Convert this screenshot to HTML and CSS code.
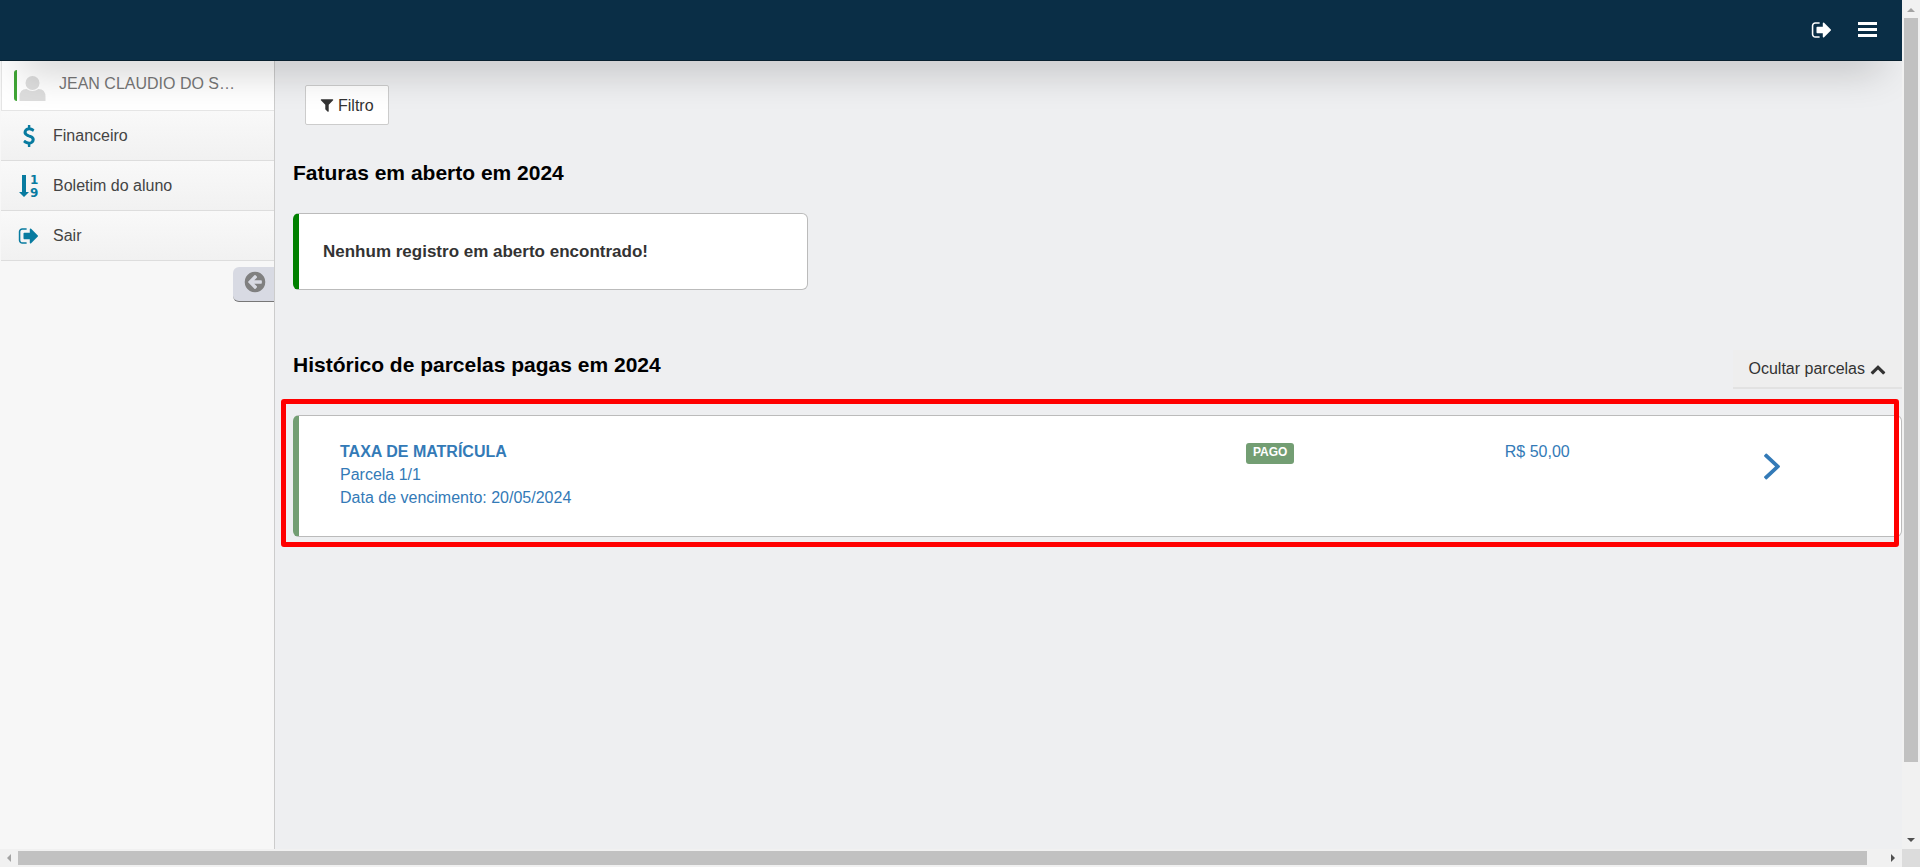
FILE: index.html
```
<!DOCTYPE html>
<html lang="pt-BR">
<head>
    <meta charset="UTF-8">
    <meta name="viewport" content="width=device-width, initial-scale=1.0">
    <title>Financeiro</title>
    <link rel="stylesheet" href="styles.css">
</head>
<body>
    <svg class="sprite" aria-hidden="true">
        <symbol id="sign-out" viewBox="0 0 1792 1792">
            <path d="M704 1440q0 4 1 20t.5 26.5-3 23.5-10 19.5-20.5 6.5h-320q-119 0-203.5-84.5t-84.5-203.5v-704q0-119 84.5-203.5t203.5-84.5h320q13 0 22.5 9.5t9.5 22.5q0 4 1 20t.5 26.5-3 23.5-10 19.5-20.5 6.5h-320q-66 0-113 47t-47 113v704q0 66 47 113t113 47h312l11.5 1 11.5 3 8 5.5 7 9 2 13.5zm928-544q0 26-19 45l-544 544q-19 19-45 19t-45-19-19-45v-288h-448q-26 0-45-19t-19-45v-384q0-26 19-45t45-19h448v-288q0-26 19-45t45-19 45 19l544 544q19 19 19 45z"/>
        </symbol>
    </svg>

    <div class="viewport">
        <div class="page">
            <header class="topbar">
                <a href="#" class="topbar-link" aria-label="Sair"><svg class="icon"><use href="#sign-out"/></svg></a>
                <button type="button" class="topbar-link" aria-label="Menu">
                    <svg class="icon-bars" viewBox="0 0 19 16"><path d="M0 0h19v3H0zM0 6h19v3H0zM0 12h19v3H0z"/></svg>
                </button>
            </header>

            <div class="main">
                <nav class="sidebar">
                    <a href="#" class="user">
                        <span class="avatar">
                            <svg viewBox="0 0 26 26"><circle cx="13" cy="8" r="7"/><path d="M0 26v-4q0-8 7-8 6 4 12 0 7 0 7 8v4z"/></svg>
                        </span>
                        <span class="user-name">JEAN CLAUDIO DO S…</span>
                    </a>
                    <a href="#" class="menu-item">
                        <svg class="icon" viewBox="0 0 1792 1792"><path d="M1362 1185q0 153-99.5 263.5t-258.5 136.5v175q0 14-9 23t-23 9h-135q-13 0-22.5-9.5t-9.5-22.5v-175q-66-9-127.5-31t-101.5-44.5-74-48-46.5-37.5-17.5-18q-17-21-2-41l103-135q7-10 23-12 15-2 24 9l2 2q113 99 243 125 37 8 74 8 81 0 142.5-43t61.5-122q0-28-15-53t-33.5-42-58.5-37.5-66-32-80-32.5q-39-16-61.5-25t-61.5-26.5-62.5-31-56.5-35.5-53.5-42.5-43.5-49-35.5-58-21-66.5-8.5-78q0-138 98-242t255-134v-180q0-13 9.5-22.5t22.5-9.5h135q14 0 23 9t9 23v176q57 6 110.5 23t87 33.5 63.5 37.5 39 29 15 14q17 18 5 38l-81 146q-8 15-23 16-14 3-27-7-3-3-14.5-12t-39-26.5-58.5-32-74.5-26-85.5-11.5q-95 0-155 43t-60 111q0 26 8.5 48t29.5 41.5 39.5 33 56 31 60.5 27 70 27.5q53 20 81 31.5t76 35 75.5 42.5 62 50 53 63.5 31.5 76.5 13 94z"/></svg>
                        Financeiro
                    </a>
                    <a href="#" class="menu-item">
                        <svg class="icon" viewBox="0 0 22 22">
                            <path d="M4 0h4v17h3l-5 5L1 17h3z"/>
                            <text x="12" y="9">1</text>
                            <text x="12" y="22">9</text>
                        </svg>
                        Boletim do aluno
                    </a>
                    <a href="#" class="menu-item">
                        <svg class="icon"><use href="#sign-out"/></svg>
                        Sair
                    </a>
                    <button type="button" class="collapse" aria-label="Recolher menu">
                        <svg viewBox="0 0 1792 1792"><path d="M1408 960v-128q0-26-19-45t-45-19h-502l189-189q19-19 19-45t-19-45l-91-91q-18-18-45-18t-45 18l-362 362-91 91q-18 18-18 45t18 45l91 91 362 362q18 18 45 18t45-18l91-91q18-18 18-45t-18-45l-189-189h502q26 0 45-19t19-45zm256-64q0 209-103 385.5t-279.5 279.5-385.5 103-385.5-103-279.5-279.5-103-385.5 103-385.5 279.5-279.5 385.5-103 385.5 103 279.5 279.5 103 385.5z"/></svg>
                    </button>
                </nav>

                <main class="content">
                    <button type="button" class="btn-filter">
                        <svg class="icon-sm" viewBox="0 0 1792 1792"><path d="M1595 295q17 41-14 70l-493 493v742q0 42-39 59-13 5-25 5-27 0-45-19l-256-256q-19-19-19-45v-486l-493-493q-31-29-14-70 17-39 59-39h1280q42 0 59 39z"/></svg>
                        Filtro
                    </button>

                    <h2>Faturas em aberto em 2024</h2>
                    <div class="card card-empty">Nenhum registro em aberto encontrado!</div>

                    <div class="history-head">
                        <h2>Histórico de parcelas pagas em 2024</h2>
                        <button type="button" class="btn-toggle">
                            Ocultar parcelas
                            <svg class="icon-sm" viewBox="0 0 1792 1792"><path d="M1683 1331l-166 165q-19 19-45 19t-45-19l-531-531-531 531q-19 19-45 19t-45-19l-166-165q-19-19-19-45.500t19-45.500l742-741q19-19 45-19t45 19l742 741q19 19 19 45.500t-19 45.500z"/></svg>
                        </button>
                    </div>
                    <div class="history">
                        <a href="#" class="card card-paid">
                            <span class="invoice">
                                <strong>TAXA DE MATRÍCULA</strong>
                                <span>Parcela 1/1</span>
                                <span>Data de vencimento: 20/05/2024</span>
                            </span>
                            <span class="status"><span class="badge">PAGO</span></span>
                            <span>R$ 50,00</span>
                            <svg class="arrow" viewBox="589 517 582 942"><path d="M1171 988q0 13-10 23l-466 438q-10 10-23 10t-23-10l-50-50q-10-10-10-23t10-23l393-365-393-365q-10-10-10-23t10-23l50-50q10-10 23-10t23 10l466 438q10 10 10 23z"/></svg>
                        </a>
                        <div class="highlight"></div>
                    </div>
                </main>
            </div>
        </div>

        <div class="scroll scroll-y">
            <svg class="scroll-arrow" viewBox="0 0 18 18"><path class="off" d="M5 12h8L9 8z"/></svg>
            <div class="thumb"></div>
            <svg class="scroll-arrow" viewBox="0 0 18 18"><path d="M5 7h8l-4 4z"/></svg>
        </div>
        <div class="scroll scroll-x">
            <svg class="scroll-arrow" viewBox="0 0 18 18"><path class="off" d="M11 5v8L7 9z"/></svg>
            <div class="thumb"></div>
            <svg class="scroll-arrow" viewBox="0 0 18 18"><path d="M7 5v8l4-4z"/></svg>
        </div>
        <div class="scroll-corner"></div>
    </div>
</body>
</html>
```
FILE: styles.css
```
* {
    box-sizing: border-box;
}
body {
    margin: 0;
    font-family: "Liberation Sans", Arial, sans-serif;
    font-size: 16px;
    line-height: 23px;
    color: #333;
}
a {
    text-decoration: none;
}
button {
    font: inherit;
    color: inherit;
    cursor: pointer;
}
svg {
    display: block;
    flex-shrink: 0;
    fill: currentColor;
}
.sprite {
    display: none;
}
.icon {
    width: 22px;
    height: 22px;
    overflow: visible;
}
.icon-sm {
    width: 16px;
    height: 16px;
}

.viewport {
    display: grid;
    grid-template-columns: 1fr 18px;
    grid-template-rows: 1fr 18px;
    height: 100vh;
}
.page {
    display: flex;
    flex-direction: column;
    min-width: 0;
    overflow: hidden;
    background: #eeeff1;
}

/* top bar */
.topbar {
    position: relative;
    z-index: 2;
    display: flex;
    justify-content: flex-end;
    align-items: center;
    gap: 25px;
    height: 61px;
    padding: 0 25px 0 0;
    background: #0a2e46;
    border-bottom: 1px solid #08202f;
    box-shadow: 0 25px 40px -20px rgba(0, 0, 0, .3);
}
.topbar-link {
    padding: 0;
    border: 0;
    background: none;
    color: #fff;
}
.icon-bars {
    width: 19px;
    height: 16px;
}

.main {
    display: flex;
    flex: 1;
}

/* sidebar */
.sidebar {
    width: 275px;
    flex-shrink: 0;
    padding-left: 1px;
    background: #f7f7f7;
    border-right: 1px solid #ccc;
}
.user {
    display: flex;
    gap: 13px;
    height: 50px;
    padding: 9px 32px 0 12px;
    background: #fff;
    border-left: 1px solid #e5e5e5;
    border-bottom: 1px solid #e5e5e5;
    color: #777;
}
.avatar {
    display: flex;
    align-items: flex-end;
    height: 31px;
    padding-left: 2px;
    border-left: 3px solid #3fa535;
    border-radius: 3px;
    color: #ddd;
}
.avatar svg {
    width: 27px;
    height: 26px;
}
.user-name {
    overflow: hidden;
    white-space: nowrap;
    text-overflow: ellipsis;
    padding-top: 2px;
}
.menu-item {
    display: flex;
    align-items: center;
    gap: 13px;
    height: 50px;
    padding-left: 17px;
    background: linear-gradient(#f9f9f9, #f1f1f1);
    border-bottom: 1px solid #ddd;
    color: #444;
}
.menu-item .icon {
    color: #087ba0;
}
.menu-item text {
    font: bold 12px "DejaVu Sans", sans-serif;
}
.collapse {
    display: flex;
    margin: 6px 0 0 auto;
    padding: 3px 7px 7px 10px;
    border: 0;
    border-bottom: 1px solid #777;
    border-radius: 6px 0 0 6px;
    background: #d8dae3;
    color: #808080;
}
.collapse svg {
    width: 24px;
    height: 24px;
}

/* content */
.content {
    flex: 1;
    min-width: 0;
    padding: 24px 0 0 18px;
}
h2 {
    margin: 0;
    font-size: 21px;
    line-height: 24px;
    color: #000;
}
.btn-filter {
    display: flex;
    align-items: center;
    gap: 3px;
    height: 40px;
    margin: 0 0 36px 12px;
    padding: 0 14px 0 13px;
    background: #fff;
    border: 1px solid #ccc;
    border-radius: 2px;
}
.card {
    background: #fff;
    border: 1px solid #bbb;
    border-left: 6px solid #008000;
    border-radius: 6px;
}
.card-empty {
    width: 32%;
    margin: 28px 0 60px;
    padding: 26px 24px;
    font-size: 17px;
    font-weight: bold;
}
.history-head {
    display: flex;
    justify-content: space-between;
    margin-bottom: 26px;
}
.history-head h2 {
    padding-top: 3px;
}
.btn-toggle {
    display: flex;
    align-items: center;
    gap: 5px;
    height: 39px;
    padding: 0 16px;
    background: #eee;
    border: 0;
    border-bottom: 2px solid #e2e2e2;
}
.history {
    position: relative;
}
.card-paid {
    display: grid;
    grid-template-columns: 7fr 2fr 2fr 1fr;
    padding: 24px 8px 27px 41px;
    border-left-color: #739e73;
    color: #337ab7;
}
.invoice {
    display: flex;
    flex-direction: column;
}
.status {
    padding-top: 3px;
}
.badge {
    display: inline-block;
    padding: 0 7px 3px;
    background: #739e73;
    border-radius: 3px;
    color: #fff;
    font-size: 12px;
    font-weight: bold;
    line-height: 18px;
    vertical-align: top;
}
.arrow {
    width: 16px;
    height: 27px;
    margin-top: 13px;
}
/* red frame laid over the invoice */
.highlight {
    position: absolute;
    inset: -16px 3px -10px -12px;
    border: 5px solid #f00;
    border-radius: 3px;
}

/* scrollbars */
.scroll {
    display: flex;
    background: #f1f1f1;
}
.scroll-y {
    flex-direction: column;
}
.scroll-arrow {
    width: 18px;
    height: 18px;
    fill: #505050;
}
.scroll-arrow .off {
    fill: #a3a3a3;
}
.thumb {
    background: #c1c1c1;
}
.scroll-y .thumb {
    flex: 0 1 744px;
    margin: 0 2px auto;
}
.scroll-x .thumb {
    flex: 1;
    margin: 2px 17px 2px 0;
}
.scroll-corner {
    background: #dcdcdc;
}
```
